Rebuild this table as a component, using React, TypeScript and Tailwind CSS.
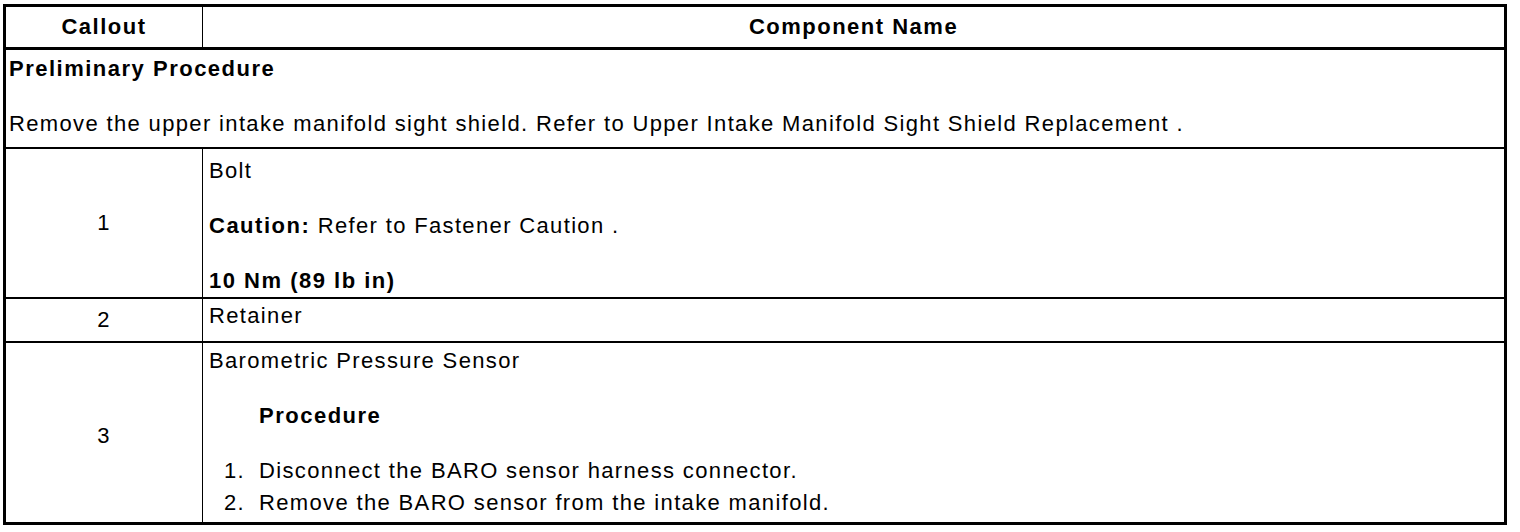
import React from "react";

export default function App() {
  return (
    <div className="bg-white w-[1520px] h-[532px] pt-[4px] pl-[3px] font-['Liberation_Sans',Arial,sans-serif] text-[22px] leading-[20px] text-black tracking-[1.35px]">
      <div className="w-[1504px] border-[3px] border-black flex flex-col">
        {/* header */}
        <div className="flex h-[43px] border-b-[3px] border-black font-bold tracking-[1.5px]">
          <div className="w-[197px] shrink-0 flex items-center justify-center border-r border-black">Callout</div>
          <div className="flex-1 flex items-center justify-center">Component Name</div>
        </div>
        {/* preliminary */}
        <div className="flex flex-col h-[99px] border-b-2 border-black pl-[3px] pt-[9px]">
          <div className="font-bold tracking-[1.5px]">Preliminary Procedure</div>
          <div className="mt-[35px]">
            Remove the upper intake manifold sight shield. Refer to Upper Intake Manifold Sight Shield Replacement .
          </div>
        </div>
        {/* row 1 */}
        <div className="flex h-[150px] border-b-2 border-black">
          <div className="w-[197px] shrink-0 flex items-center justify-center border-r border-black">1</div>
          <div className="flex-1 flex flex-col pl-[6px] pt-[12px]">
            <div>Bolt</div>
            <div className="mt-[35px]">
              <span className="font-bold tracking-[1.5px]">Caution:</span> Refer to Fastener Caution .
            </div>
            <div className="mt-[35px] font-bold tracking-[1.5px]">10 Nm (89 lb in)</div>
          </div>
        </div>
        {/* row 2 */}
        <div className="flex h-[44px] border-b-2 border-black">
          <div className="w-[197px] shrink-0 flex items-center justify-center border-r border-black">2</div>
          <div className="flex-1 flex flex-col pl-[6px] pt-[7px]">
            <div>Retainer</div>
          </div>
        </div>
        {/* row 3 */}
        <div className="flex h-[179px]">
          <div className="w-[197px] shrink-0 flex items-center justify-center border-r border-black pt-[6px]">3</div>
          <div className="flex-1 flex flex-col pl-[6px] pt-[8px]">
            <div>Barometric Pressure Sensor</div>
            <div className="mt-[35px] pl-[50px] font-bold tracking-[1.5px]">Procedure</div>
            <div className="mt-[35px] flex pl-[15px]">
              <span className="w-[35px] shrink-0">1.</span>
              <span>Disconnect the BARO sensor harness connector.</span>
            </div>
            <div className="mt-[12px] flex pl-[15px]">
              <span className="w-[35px] shrink-0">2.</span>
              <span>Remove the BARO sensor from the intake manifold.</span>
            </div>
          </div>
        </div>
      </div>
    </div>
  );
}
